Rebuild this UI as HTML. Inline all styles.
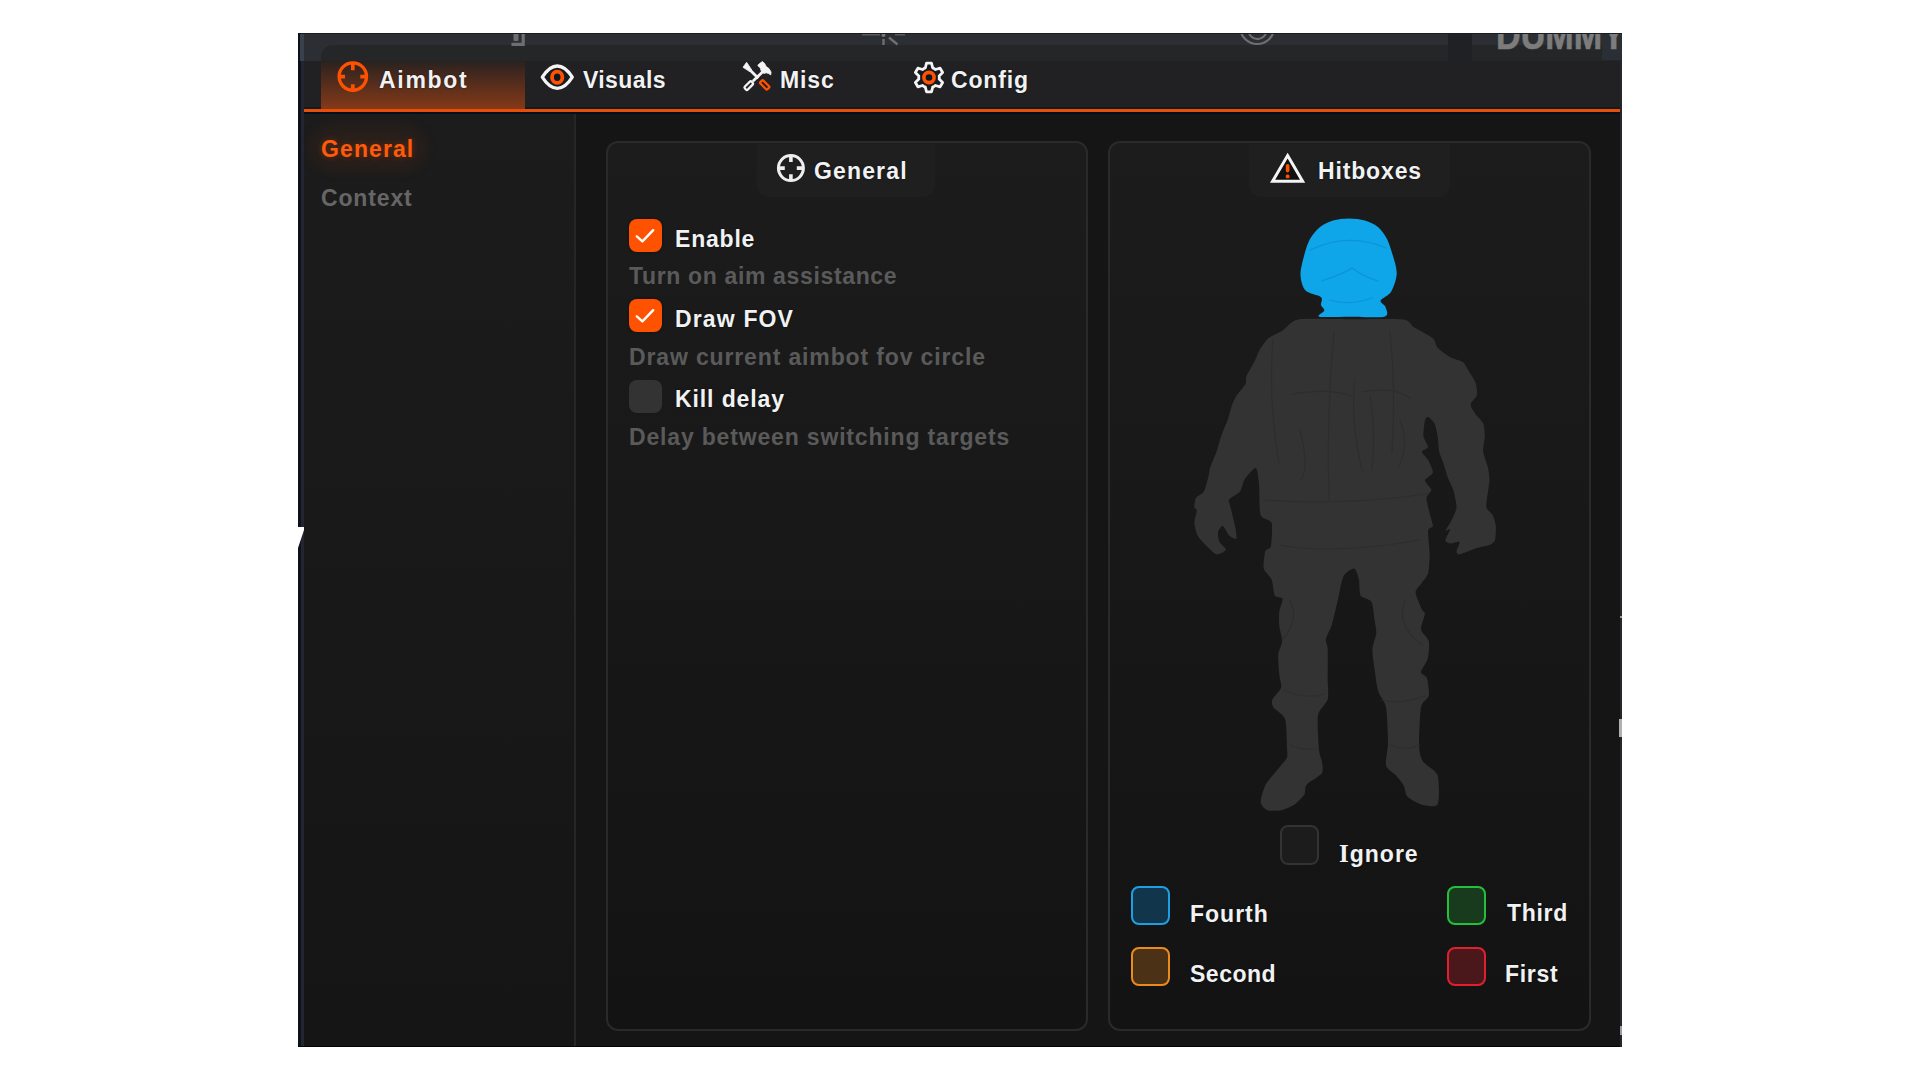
<!DOCTYPE html>
<html>
<head>
<meta charset="utf-8">
<style>
html,body{margin:0;padding:0;}
body{width:1920px;height:1080px;overflow:hidden;background:#ffffff;position:relative;font-family:"Liberation Sans",sans-serif;font-weight:bold;}
.a{position:absolute;}
.t{position:absolute;white-space:pre;font-size:23px;line-height:23px;color:#f2f2f2;text-shadow:0 0 2px rgba(0,8,16,0.7);}
.g{color:#5a5a5a;text-shadow:none;}
svg{position:absolute;overflow:visible;}
.cb{position:absolute;width:33px;height:33px;border-radius:8px;background:#ff5200;box-shadow:0 0 3px rgba(0,10,20,0.6);}
.hb{position:absolute;width:35px;height:35px;border-radius:8px;border:2.5px solid;}
</style>
</head>
<body>
<!-- window frame -->
<div class="a" style="left:298px;top:33px;width:1324px;height:1014px;background:#212123;"></div>
<!-- top strip -->
<div class="a" style="left:298px;top:33px;width:1324px;height:28px;background:#2b2e33;"></div>
<div class="a" style="left:298px;top:33px;width:1324px;height:1px;background:#1a1c20;"></div>
<div class="a" style="left:321px;top:45px;width:1127px;height:16px;background:#252628;border-radius:12px 0 0 0;"></div>
<div class="a" style="left:1448px;top:33px;width:24px;height:28px;background:#202124;"></div>
<div class="a" style="left:1472px;top:45px;width:150px;height:16px;background:#252628;"></div>
<div class="a" style="left:1602px;top:45px;width:20px;height:15px;background:#2a2e35;"></div>
<!-- HUD bits in top strip -->
<div class="a" style="left:298px;top:33px;width:1324px;height:28px;overflow:hidden;">
<svg style="left:-298px;top:-33px;width:1920px;height:1080px;">
  <g fill="none" stroke="#6e6e6e" stroke-width="2.2">
    <path d="M523.2,33 V44.3 H511.5" stroke-width="3.2"/>
    <rect x="513.5" y="31" width="5" height="10" rx="1" fill="#6e6e6e" stroke="none"/>
    <path d="M862,34.5 H880 M895,34.5 H905" stroke="#5a5a5a"/>
    <circle cx="883.5" cy="35" r="2" fill="#777" stroke="none"/>
    <path d="M883.5,39 V45 M889,37.5 L897.5,44.5" stroke-width="2.4"/>
    <circle cx="1257.2" cy="26.9" r="17.1" />
    <circle cx="1257.5" cy="30.3" r="8.9" />
  </g>
  <text x="1496" y="48.5" font-family="Liberation Sans" font-weight="bold" font-size="40" fill="#7c7c7c" stroke="#7c7c7c" stroke-width="0.6" textLength="129" lengthAdjust="spacingAndGlyphs">DUMMY</text>
</svg>
</div>
<div class="a" style="left:298px;top:33px;width:1324px;height:1px;background:#1a1c20;"></div>
<!-- left stripe -->
<div class="a" style="left:298px;top:33px;width:3px;height:1014px;background:#0c111b;"></div>
<div class="a" style="left:301px;top:61px;width:3px;height:986px;background:#23262d;"></div>
<div class="a" style="left:300px;top:34px;width:4px;height:27px;background:#3a404c;"></div>
<svg style="left:0;top:0;width:1920px;height:1080px;"><path d="M298,527 H305 L298,548 Z" fill="#ffffff"/></svg>

<!-- tab bar -->
<div class="a" style="left:321px;top:61px;width:204px;height:48px;background:linear-gradient(#2a2220,#853a18);"></div>
<div class="a" style="left:525px;top:107px;width:1095px;height:2px;background:#101b22;"></div>
<div class="a" style="left:304px;top:107px;width:17px;height:2px;background:#101b22;"></div>
<div class="a" style="left:304px;top:109px;width:1316px;height:3px;background:#e84e08;"></div>
<div class="a" style="left:304px;top:112px;width:1318px;height:2px;background:#06101a;"></div>

<!-- sidebar -->
<div class="a" style="left:304px;top:114px;width:270px;height:932px;background:linear-gradient(#1c1c1c,#151515);"></div>
<div class="a" style="left:574px;top:114px;width:2px;height:932px;background:#262626;"></div>
<!-- content -->
<div class="a" style="left:576px;top:114px;width:1046px;height:932px;background:#151515;"></div>
<div class="a" style="left:298px;top:1046px;width:1324px;height:1px;background:#050505;"></div>
<!-- glow behind sidebar General -->
<div class="a" style="left:312px;top:128px;width:112px;height:40px;border-radius:20px;background:rgba(255,80,0,0.07);filter:blur(8px);"></div>

<!-- right stripe -->
<div class="a" style="left:1620px;top:61px;width:2px;height:986px;background:#25272c;"></div>
<div class="a" style="left:1620px;top:616px;width:2px;height:2px;background:#9a9a9a;"></div>
<div class="a" style="left:1619px;top:719px;width:3px;height:18px;background:#b0b0b0;"></div>
<div class="a" style="left:1620px;top:1026px;width:2px;height:9px;background:#9a9ca5;"></div>
<!-- panels -->
<div class="a" style="left:606px;top:141px;width:478px;height:886px;border:2px solid #2a2a2a;border-radius:12px;background:linear-gradient(#1c1c1c,#131313);"></div>
<div class="a" style="left:1108px;top:141px;width:479px;height:886px;border:2px solid #2a2a2a;border-radius:12px;background:linear-gradient(#1c1c1c,#131313);"></div>
<div class="a" style="left:757px;top:144px;width:178px;height:53px;background:#1f1f1f;border-radius:0 0 12px 12px;"></div>
<div class="a" style="left:1249px;top:144px;width:201px;height:53px;background:#1f1f1f;border-radius:0 0 12px 12px;"></div>

<!-- icons -->
<svg style="left:0;top:0;width:1920px;height:1080px;">
  <!-- aimbot crosshair -->
  <g stroke="#ff5200" fill="none">
    <circle cx="352.8" cy="76.6" r="13.7" stroke-width="3.3"/>
    <path d="M352.8,63 V70.3 M352.8,84.2 V90.2 M339.2,76.6 H345 M360.3,76.6 H366.4" stroke-width="3.7"/>
  </g>
  <!-- general crosshair -->
  <g stroke="#eeeeee" fill="none">
    <circle cx="790.9" cy="168.1" r="12.5" stroke-width="3"/>
    <path d="M790.9,156 V162 M790.9,174.2 V180 M778.5,168.1 H784.8 M796.8,168.1 H803" stroke-width="3.6"/>
  </g>
  <!-- eye -->
  <g fill="none" stroke-linejoin="round">
    <path d="M542.3,77.2 C547.5,69 552,66 557.3,66 C562.6,66 567.1,69 572.3,77.2 C567.1,85.4 562.6,88.4 557.3,88.4 C552,88.4 547.5,85.4 542.3,77.2 Z" stroke="#f4f4f4" stroke-width="3.3" fill="#181c20"/>
    <ellipse cx="557.2" cy="77.3" rx="5.2" ry="5.6" stroke="#ff5200" stroke-width="3.8" fill="#0c1820"/>
  </g>
  <!-- misc tools -->
  <g transform="translate(738,58)">
    <polygon points="5.0,9.3 8.6,4.3 13.8,12.0 12.0,13.8" fill="#f4f4f4" stroke="#f4f4f4" stroke-width="0.8" stroke-linejoin="round"/>
    <path d="M12.5,12.5 L20.3,20.3" stroke="#f4f4f4" stroke-width="2.8"/>
    <g transform="translate(26.7,26.9) rotate(45)">
      <rect x="-5" y="-2.1" width="10" height="4.2" rx="1" fill="#2a1a14" stroke="#ff5200" stroke-width="2.3"/>
    </g>
    <polygon points="19.7,7.4 21.8,5.3 24.6,3.5 26.7,5.6 28.1,8.4 31,10.6 33.1,14.1 32.7,16.9 30.6,15.5 28.1,14.8 26,15.5 24.3,14.1 22.9,12.3 22.5,10.2" fill="#f4f4f4" stroke="#f4f4f4" stroke-width="0.8" stroke-linejoin="round"/>
    <path d="M14.8,23.2 L25,13.5" stroke="#f4f4f4" stroke-width="2.8"/>
    <g transform="translate(10.8,27.6) rotate(-45)">
      <rect x="-4.8" y="-2.1" width="9.6" height="4.2" rx="1.4" fill="#2a2a2a" stroke="#f4f4f4" stroke-width="2.3"/>
    </g>
  </g>
  <!-- gear -->
  <g transform="translate(910,58)">
    <path d="M13.85,10.58 L15.31,9.88 L16.48,5.22 L21.52,5.22 L22.69,9.88 L24.15,10.58 L25.48,11.50 L30.11,10.18 L32.63,14.54 L29.17,17.89 L29.30,19.50 L29.17,21.11 L32.63,24.46 L30.11,28.82 L25.48,27.50 L24.15,28.42 L22.69,29.12 L21.52,33.78 L16.48,33.78 L15.31,29.12 L13.85,28.42 L12.52,27.50 L7.89,28.82 L5.37,24.46 L8.83,21.11 L8.70,19.50 L8.83,17.89 L5.37,14.54 L7.89,10.18 L12.52,11.50Z" fill="#171a1e" stroke="#f4f4f4" stroke-width="2.8" stroke-linejoin="round"/>
    <circle cx="19" cy="19.5" r="5.1" fill="#0c1820" stroke="#ff5200" stroke-width="3.6"/>
  </g>
  <!-- warning triangle -->
  <g>
    <path d="M1287.6,155.6 L1302.6,181.2 L1272.6,181.2 Z" fill="#111111" stroke="#f4f4f4" stroke-width="3" stroke-linejoin="miter"/>
    <path d="M1287.6,165.8 V170.6" stroke="#ff5200" stroke-width="3.6" stroke-linecap="round"/>
    <rect x="1285.7" y="174.4" width="3.8" height="3.8" rx="1.5" fill="#ff5200"/>
  </g>
</svg>

<!-- checkboxes -->
<div class="cb" style="left:629px;top:219px;"></div>
<div class="cb" style="left:629px;top:299px;"></div>
<div class="cb" style="left:629px;top:380px;background:#333333;box-shadow:none;"></div>
<svg style="left:0;top:0;width:1920px;height:1080px;">
  <path d="M636.8,236.4 L642.4,241.4 L653.2,230.2" fill="none" stroke="#ffffff" stroke-width="2.4" stroke-linecap="round" stroke-linejoin="round"/>
  <path d="M636.8,316.4 L642.4,321.4 L653.2,310.2" fill="none" stroke="#ffffff" stroke-width="2.4" stroke-linecap="round" stroke-linejoin="round"/>
</svg>

<!-- hitbox color boxes -->
<div class="hb" style="left:1280px;top:825px;border-color:#333333;background:#1c1c1c;width:35px;height:36px;border-width:2px;"></div>
<div class="hb" style="left:1131px;top:886px;border-color:#1e9fe3;background:#11354a;"></div>
<div class="hb" style="left:1447px;top:886px;border-color:#22c03e;background:#173b1c;"></div>
<div class="hb" style="left:1131px;top:947px;border-color:#ec8a1e;background:#4b3116;"></div>
<div class="hb" style="left:1447px;top:947px;border-color:#e0202e;background:#4a171b;"></div>

<!-- soldier model placeholder -->
<svg id="soldier" style="left:0;top:0;width:1920px;height:1080px;">
  <path fill="#333333" d="M1298.3,319.4 C1306.2,318.1 1337.8,319.2 1350.0,319.2 C1362.2,319.2 1395.5,318.5 1403.0,319.4 C1410.5,320.3 1410.5,325.1 1414.0,327.3 C1417.5,329.5 1430.1,335.9 1432.9,338.3 C1435.7,340.7 1435.6,345.6 1437.6,347.8 C1439.6,350.0 1447.3,355.5 1450.2,357.2 C1453.1,358.9 1460.6,360.3 1462.8,362.0 C1465.0,363.7 1467.5,369.0 1469.0,371.4 C1470.5,373.8 1474.5,379.6 1475.4,382.4 C1476.3,385.2 1477.6,392.4 1477.0,395.0 C1476.4,397.6 1470.8,402.2 1470.6,404.4 C1470.4,406.6 1473.9,411.7 1475.4,413.9 C1476.9,416.1 1482.1,420.7 1483.2,423.3 C1484.3,425.9 1484.8,432.6 1484.8,435.9 C1484.8,439.2 1482.8,448.0 1483.2,451.7 C1483.6,455.4 1487.3,464.1 1488.0,467.4 C1488.7,470.7 1489.5,477.2 1489.5,480.0 C1489.5,482.8 1488.4,488.3 1488.0,491.5 C1487.6,494.7 1485.9,504.4 1486.4,507.2 C1486.9,510.0 1491.6,512.9 1492.7,515.1 C1493.8,517.3 1495.5,523.2 1495.8,526.1 C1496.1,529.0 1495.7,538.1 1495.0,540.3 C1494.3,542.5 1491.6,544.1 1489.5,545.0 C1487.4,545.9 1480.5,547.0 1477.0,548.1 C1473.5,549.2 1462.0,554.0 1459.6,554.4 C1457.2,554.8 1456.5,552.8 1456.5,551.3 C1456.5,549.8 1460.3,542.8 1459.6,541.9 C1458.9,541.0 1451.8,543.6 1450.2,543.4 C1448.6,543.2 1445.5,541.9 1445.5,540.3 C1445.5,538.7 1450.2,530.4 1450.2,529.3 C1450.2,528.2 1445.3,531.9 1445.5,530.8 C1445.7,529.7 1450.5,522.6 1451.8,519.8 C1453.1,517.0 1456.3,510.7 1456.5,507.2 C1456.7,503.7 1454.3,493.4 1453.3,490.0 C1452.3,486.6 1449.2,481.3 1448.0,478.0 C1446.8,474.7 1444.0,465.1 1443.0,462.0 C1442.0,458.9 1439.8,454.7 1439.2,451.7 C1438.6,448.7 1438.2,439.2 1437.6,435.9 C1437.0,432.6 1435.5,425.5 1434.4,423.3 C1433.3,421.1 1429.2,417.4 1428.1,417.0 C1427.0,416.6 1425.5,418.0 1425.0,420.2 C1424.5,422.4 1423.1,432.9 1423.4,436.0 C1423.8,439.1 1428.2,445.2 1428.0,447.0 C1427.8,448.8 1421.9,450.2 1421.9,451.7 C1421.9,453.2 1426.8,457.6 1428.1,460.0 C1429.4,462.4 1433.3,470.2 1432.9,472.6 C1432.5,475.0 1425.2,478.5 1425.0,480.5 C1424.8,482.5 1431.1,487.9 1431.3,489.9 C1431.5,491.9 1426.8,495.0 1426.6,497.8 C1426.4,500.6 1429.0,510.2 1429.7,513.5 C1430.4,516.8 1433.1,524.1 1432.9,526.1 C1432.7,528.1 1428.5,527.5 1428.1,530.8 C1427.7,534.1 1429.7,549.4 1429.7,554.4 C1429.7,559.4 1429.0,570.0 1428.1,573.3 C1427.2,576.6 1423.4,580.6 1421.9,582.8 C1420.4,585.0 1415.6,589.1 1415.6,592.2 C1415.6,595.3 1420.8,607.0 1421.9,609.5 C1423.0,612.0 1425.0,611.6 1424.9,613.9 C1424.8,616.2 1420.5,626.2 1421.0,629.4 C1421.5,632.6 1428.0,637.7 1428.8,641.1 C1429.6,644.5 1428.7,655.0 1427.8,658.6 C1426.9,662.2 1421.1,669.9 1421.0,672.2 C1420.9,674.5 1426.0,675.3 1426.9,678.0 C1427.8,680.7 1429.5,692.1 1428.8,695.5 C1428.1,698.9 1422.1,701.3 1421.0,707.2 C1419.9,713.1 1418.9,739.8 1419.1,746.1 C1419.3,752.4 1420.8,758.2 1423.0,761.6 C1425.2,765.0 1435.9,770.2 1437.6,775.2 C1439.3,780.2 1439.5,801.0 1437.6,804.4 C1435.7,807.8 1424.5,805.3 1421.0,804.4 C1417.5,803.5 1409.4,798.9 1407.4,796.6 C1405.4,794.3 1404.9,787.4 1403.5,784.9 C1402.1,782.4 1397.8,777.5 1395.8,775.2 C1393.8,772.9 1386.9,769.4 1386.0,765.5 C1385.1,761.6 1388.0,749.0 1388.0,742.2 C1388.0,735.4 1387.1,713.1 1386.0,707.2 C1384.9,701.3 1379.7,696.1 1378.3,691.6 C1376.9,687.1 1375.1,673.3 1374.4,668.3 C1373.7,663.3 1372.2,653.0 1372.4,648.9 C1372.6,644.8 1376.1,636.7 1376.3,633.3 C1376.5,629.9 1375.1,623.7 1374.5,620.0 C1373.9,616.3 1373.1,604.6 1371.5,601.7 C1369.9,598.8 1362.0,598.0 1360.5,595.4 C1359.0,592.8 1359.6,582.7 1358.9,579.6 C1358.2,576.5 1356.0,569.0 1354.2,568.6 C1352.4,568.2 1345.4,572.7 1343.6,576.0 C1341.8,579.3 1339.4,593.0 1338.5,597.0 C1337.6,601.0 1336.3,606.7 1335.5,610.0 C1334.7,613.3 1332.7,622.1 1331.6,625.5 C1330.5,628.9 1326.3,636.5 1325.8,639.2 C1325.3,641.9 1327.5,643.9 1327.7,648.7 C1327.9,653.5 1327.7,674.1 1327.7,680.0 C1327.7,685.9 1328.8,695.3 1327.7,699.4 C1326.6,703.5 1319.0,709.1 1318.0,715.0 C1317.0,720.9 1318.5,744.6 1319.0,750.0 C1319.5,755.4 1321.6,758.9 1321.9,761.6 C1322.2,764.3 1323.7,770.6 1321.9,773.3 C1320.1,776.0 1308.4,782.4 1306.4,784.9 C1304.4,787.4 1305.8,792.3 1304.4,794.6 C1303.0,796.9 1297.4,802.6 1294.7,804.4 C1292.0,806.2 1284.3,809.5 1281.1,810.2 C1277.9,810.9 1269.9,811.1 1267.5,810.2 C1265.1,809.3 1260.9,805.4 1260.7,802.4 C1260.5,799.4 1263.3,789.0 1265.5,784.9 C1267.7,780.8 1276.7,770.6 1279.2,767.4 C1281.7,764.2 1286.0,760.2 1286.9,757.7 C1287.8,755.2 1287.1,750.6 1286.9,746.1 C1286.7,741.6 1286.6,723.3 1285.0,718.8 C1283.4,714.3 1274.8,709.5 1273.3,707.2 C1271.8,704.9 1271.5,701.7 1272.4,699.4 C1273.3,697.1 1280.3,690.7 1281.1,687.7 C1281.9,684.7 1279.5,678.0 1279.2,674.1 C1278.9,670.2 1277.9,658.6 1278.2,654.7 C1278.5,650.9 1282.0,644.5 1282.1,641.1 C1282.2,637.7 1279.5,629.0 1279.2,625.5 C1278.9,622.0 1279.0,614.2 1279.4,611.1 C1279.8,608.0 1283.1,600.3 1282.6,598.5 C1282.1,596.7 1276.0,597.6 1274.7,595.4 C1273.4,593.2 1272.9,582.7 1271.6,579.6 C1270.3,576.5 1264.4,571.9 1263.7,568.6 C1263.0,565.3 1264.5,553.9 1265.3,551.3 C1266.1,548.7 1270.1,549.9 1270.8,546.6 C1271.5,543.3 1272.8,526.7 1271.6,523.0 C1270.4,519.3 1262.1,519.6 1260.6,515.0 C1259.1,510.4 1259.6,489.1 1259.0,483.6 C1258.4,478.1 1257.5,468.4 1255.8,467.9 C1254.1,467.4 1246.6,476.1 1244.8,478.9 C1243.0,481.7 1241.9,489.1 1240.1,491.5 C1238.3,493.9 1230.2,497.6 1229.1,499.4 C1228.0,501.2 1229.9,503.9 1230.6,507.2 C1231.3,510.5 1234.7,524.0 1235.4,527.7 C1236.1,531.4 1236.9,537.8 1236.2,538.7 C1235.5,539.6 1230.7,537.1 1229.1,535.6 C1227.5,534.1 1224.1,526.5 1222.8,526.1 C1221.5,525.7 1218.4,530.6 1218.0,532.4 C1217.6,534.2 1218.7,539.9 1219.6,541.9 C1220.5,543.9 1226.3,548.2 1225.9,549.7 C1225.5,551.2 1218.9,554.9 1216.5,554.4 C1214.1,553.9 1207.7,547.2 1205.5,545.0 C1203.3,542.8 1198.9,538.2 1197.6,535.6 C1196.3,533.0 1194.5,525.9 1194.4,523.0 C1194.3,520.1 1196.8,512.2 1196.8,510.4 C1196.8,508.6 1194.5,508.7 1194.4,507.2 C1194.3,505.7 1194.9,499.6 1196.0,497.8 C1197.1,496.0 1202.4,494.1 1203.9,491.5 C1205.4,488.9 1207.9,478.5 1208.6,475.7 C1209.3,472.9 1209.3,470.2 1210.2,467.4 C1211.1,464.6 1215.2,455.4 1216.5,451.7 C1217.8,448.0 1219.9,439.6 1221.2,435.9 C1222.5,432.2 1226.2,423.9 1227.5,420.2 C1228.8,416.5 1231.1,407.3 1232.2,404.4 C1233.3,401.5 1235.4,397.4 1237.0,395.0 C1238.6,392.6 1244.5,386.2 1245.6,384.0 C1246.7,381.8 1245.4,378.7 1246.4,376.1 C1247.4,373.5 1252.8,364.8 1254.3,361.9 C1255.8,359.0 1257.4,353.7 1259.0,350.9 C1260.6,348.1 1265.6,340.7 1268.4,338.3 C1271.2,335.9 1279.1,332.7 1282.6,330.5 C1286.1,328.3 1290.4,320.7 1298.3,319.4Z"/>
    <g fill="none" stroke="#2a2a2a" stroke-width="1.2" stroke-linecap="round" opacity="0.6">
    <path d="M1273,338 Q1268,400 1279,463"/>
    <path d="M1334,331 Q1326,420 1329,500"/>
    <path d="M1390,331 Q1396,390 1392,452"/>
    <path d="M1264,500 Q1340,506 1427,494"/>
    <path d="M1292,394 Q1330,388 1352,396 M1362,392 Q1395,386 1410,398"/>
    <path d="M1355,378 Q1350,420 1362,470 M1370,395 Q1376,430 1372,470"/>
    <path d="M1300,430 Q1310,470 1300,480 M1400,420 Q1410,445 1398,468"/>
    <path d="M1280,545 Q1330,555 1420,540"/>
    <path d="M1290,600 Q1300,620 1282,640 M1405,600 Q1395,625 1422,645"/>
    <path d="M1284,690 Q1305,700 1325,694 M1380,700 Q1400,705 1425,696"/>
    <path d="M1290,745 Q1305,752 1318,748 M1390,745 Q1405,752 1420,745"/>
  </g>
  <path fill="#0ea5e9" d="M1349.0,218.5 C1344.2,218.5 1337.3,219.2 1333.0,220.5 C1328.7,221.8 1323.5,224.2 1320.0,227.0 C1316.5,229.8 1312.4,234.7 1310.0,239.0 C1307.6,243.3 1305.4,250.6 1304.0,256.0 C1302.6,261.4 1300.3,269.8 1300.5,275.0 C1300.7,280.2 1302.5,287.3 1305.6,290.6 C1308.7,293.9 1318.7,295.0 1321.0,297.2 C1323.3,299.4 1320.5,303.0 1321.0,305.0 C1321.5,307.0 1324.6,308.8 1324.4,310.6 C1324.2,312.4 1315.6,315.8 1319.4,316.7 C1323.2,317.6 1340.2,316.7 1350.0,316.7 C1359.8,316.7 1379.1,318.1 1384.4,316.7 C1389.7,315.3 1386.2,309.6 1385.6,307.2 C1385.0,304.8 1379.8,302.9 1380.6,300.6 C1381.4,298.3 1388.7,295.7 1391.1,291.7 C1393.5,287.7 1396.4,279.3 1396.7,273.9 C1397.0,268.5 1394.5,261.2 1393.0,256.0 C1391.5,250.8 1389.2,243.3 1387.0,239.0 C1384.8,234.7 1381.3,229.8 1378.0,227.0 C1374.7,224.2 1369.3,221.8 1365.0,220.5 C1360.7,219.2 1353.8,218.5 1349.0,218.5Z"/>
  <g fill="none" stroke="#0b8ecc" stroke-width="1.3" stroke-linecap="round" opacity="0.7">
    <path d="M1310,250 Q1349,232 1386,248"/>
    <path d="M1322,281 Q1347,272 1352,268 Q1362,276 1378,281"/>
    <path d="M1330,300 Q1350,306 1372,298"/>
  </g>
</svg>

<!-- texts -->
<div class="t" style="left:379px;top:69px;letter-spacing:1.7px;">Aimbot</div>
<div class="t" style="left:583px;top:69px;letter-spacing:0.4px;">Visuals</div>
<div class="t" style="left:780px;top:69px;letter-spacing:0.9px;">Misc</div>
<div class="t" style="left:951px;top:69px;letter-spacing:0.85px;">Config</div>
<div class="t" style="left:321px;top:138px;color:#ff5a0a;letter-spacing:1.1px;text-shadow:0 0 6px rgba(255,80,0,0.25);">General</div>
<div class="t" style="left:321px;top:187px;color:#666666;letter-spacing:0.85px;text-shadow:none;">Context</div>
<div class="t" style="left:814px;top:160px;letter-spacing:1.15px;">General</div>
<div class="t" style="left:1318px;top:160px;letter-spacing:0.85px;">Hitboxes</div>
<div class="t" style="left:675px;top:228px;letter-spacing:0.8px;">Enable</div>
<div class="t g" style="left:629px;top:265px;letter-spacing:0.65px;">Turn on aim assistance</div>
<div class="t" style="left:675px;top:308px;letter-spacing:1.15px;">Draw FOV</div>
<div class="t g" style="left:629px;top:346px;letter-spacing:0.86px;">Draw current aimbot fov circle</div>
<div class="t" style="left:675px;top:388px;letter-spacing:0.9px;">Kill delay</div>
<div class="t g" style="left:629px;top:426px;letter-spacing:0.83px;">Delay between switching targets</div>
<div class="t" style="left:1339px;top:842px;letter-spacing:1.0px;"><span style="font-family:'Liberation Serif';font-size:25px;">I</span>gnore</div>
<div class="t" style="left:1190px;top:903px;letter-spacing:1.0px;">Fourth</div>
<div class="t" style="left:1507px;top:902px;letter-spacing:0.7px;">Third</div>
<div class="t" style="left:1190px;top:963px;letter-spacing:0.5px;">Second</div>
<div class="t" style="left:1505px;top:963px;letter-spacing:0.68px;">First</div>
</body>
</html>
